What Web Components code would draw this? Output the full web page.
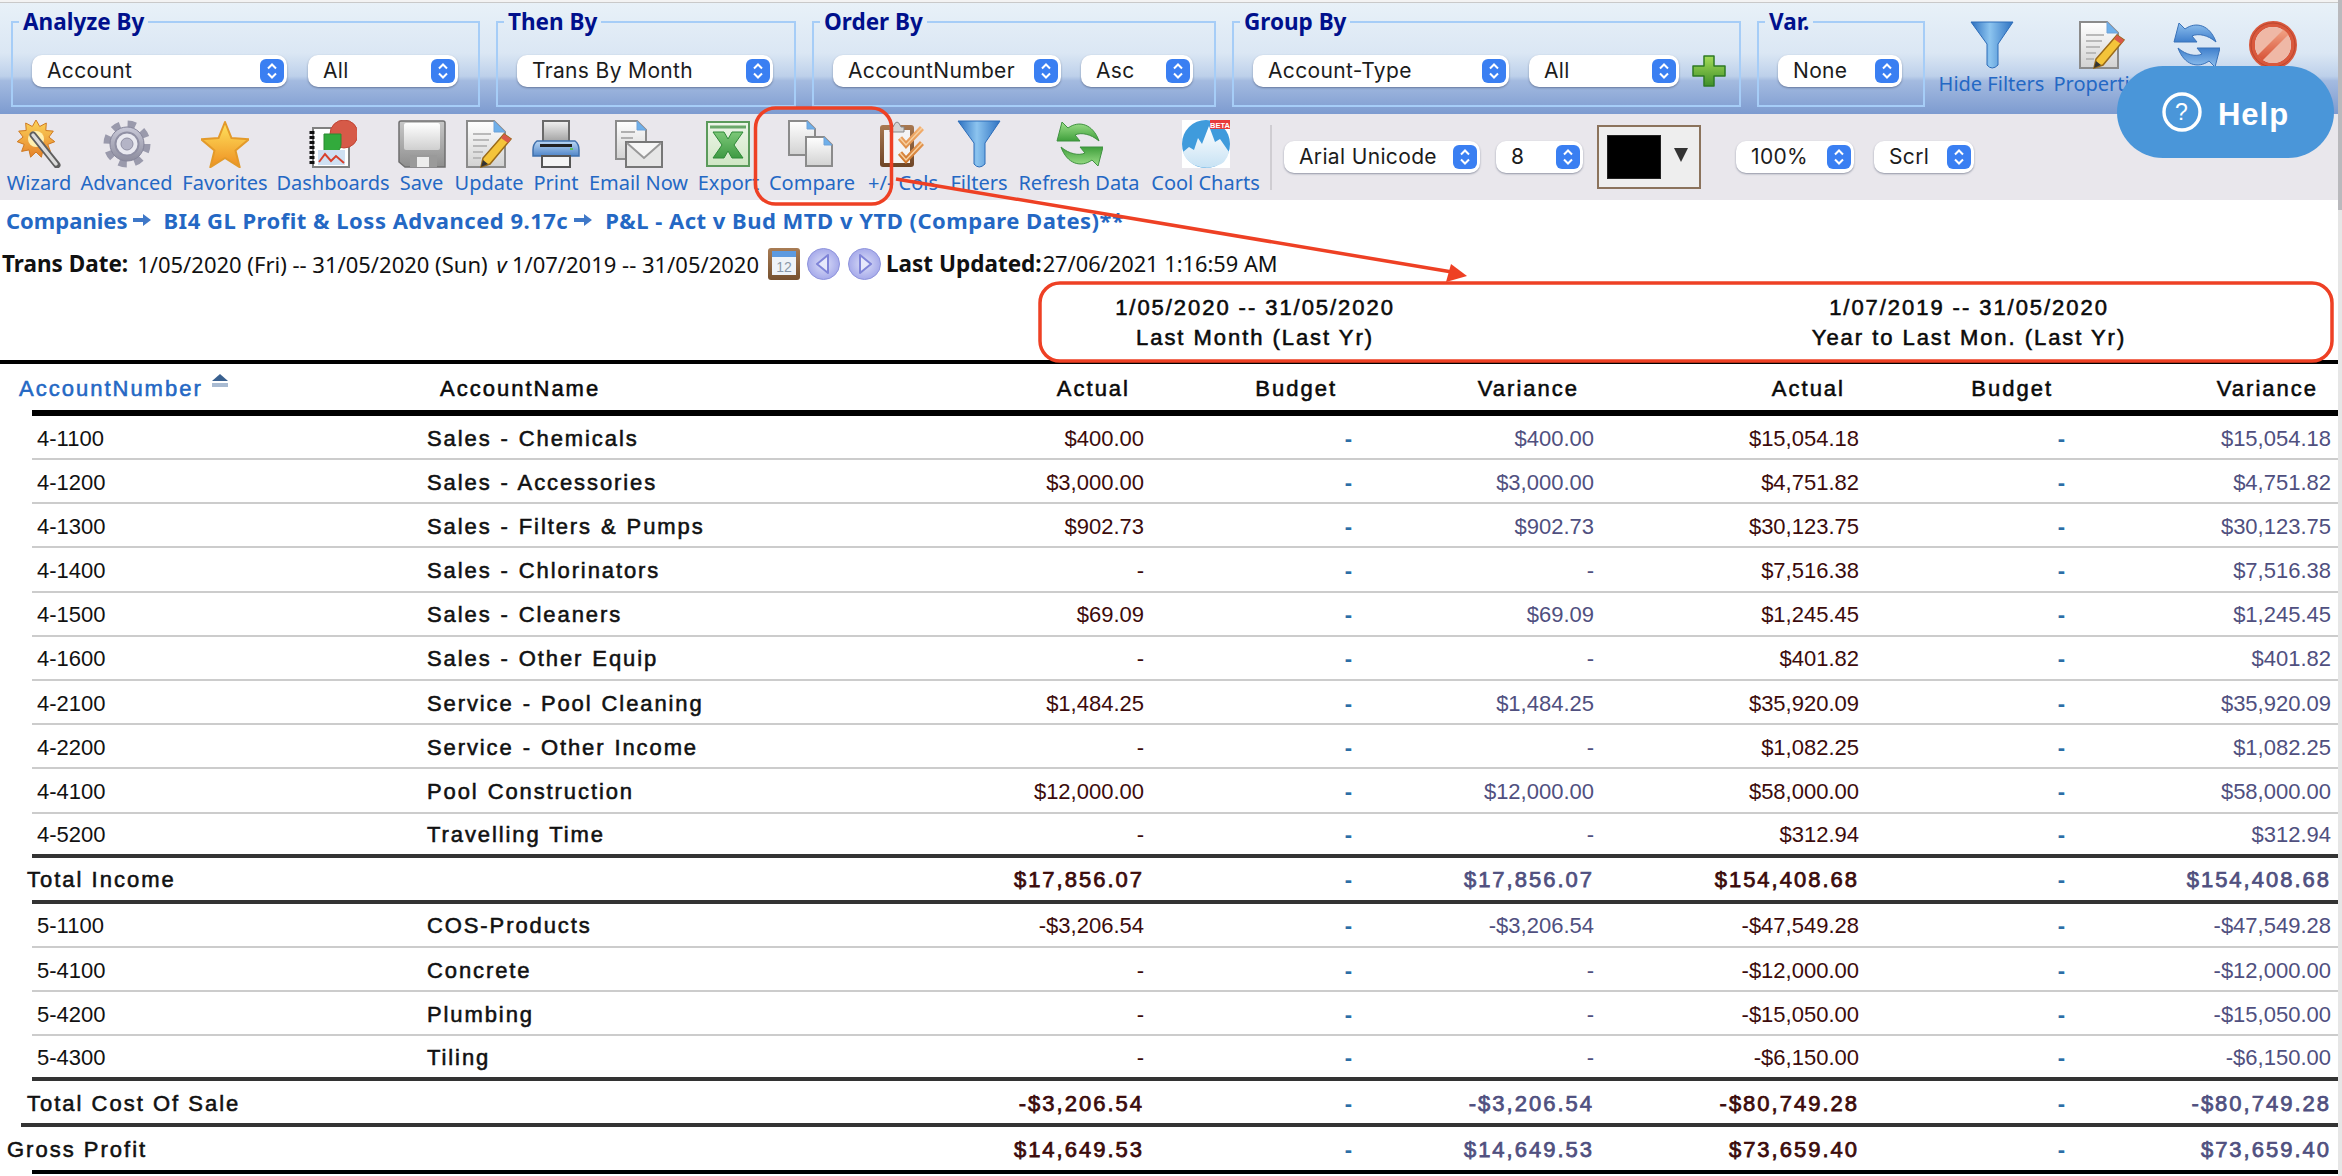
<!DOCTYPE html>
<html lang="en"><head><meta charset="utf-8"><title>Report</title>
<style>
html,body{margin:0;padding:0;background:#fff;}
body{width:2342px;height:1176px;overflow:hidden;position:relative;font-family:"Liberation Sans",Arial,sans-serif;}
</style></head><body>
<top-strip></top-strip>
<filter-bar>
  <filter-group legend="Analyze By" w="469"><pick-select w="255">Account</pick-select><pick-select w="150">All</pick-select></filter-group>
  <filter-group legend="Then By" w="300"><pick-select w="256">Trans By Month</pick-select></filter-group>
  <filter-group legend="Order By" w="404"><pick-select w="228">AccountNumber</pick-select><pick-select w="112" style="margin-left:-1px">Asc</pick-select></filter-group>
  <filter-group legend="Group By" w="509"><pick-select w="256">Account-Type</pick-select><pick-select w="150" style="margin-left:-1px">All</pick-select><bar-icon name="plus" style="margin-left:-8px"></bar-icon></filter-group>
  <filter-group legend="Var." w="168"><pick-select w="124">None</pick-select></filter-group>
  <tool-item icon="funnel" w="109" style="margin:12px 0 0 -4px">Hide Filters</tool-item>
  <tool-item icon="update" w="96" style="margin:12px 0 0 -8px">Properties</tool-item>
  <tool-item icon="refreshBlue" w="76" style="margin:12px 0 0 -8px"></tool-item>
  <tool-item icon="cancel" w="62" style="margin:12px 0 0 -8px"></tool-item>
</filter-bar>
<tool-bar>
  <tool-item icon="wizard" w="64">Wizard</tool-item>
  <tool-item icon="gear" w="93">Advanced</tool-item>
  <tool-item icon="star" w="86">Favorites</tool-item>
  <tool-item icon="dash" w="112">Dashboards</tool-item>
  <tool-item icon="save" w="47">Save</tool-item>
  <tool-item icon="update" w="70">Update</tool-item>
  <tool-item icon="print" w="46">Print</tool-item>
  <tool-item icon="email" w="101">Email Now</tool-item>
  <tool-item icon="excel" w="61">Export</tool-item>
  <tool-item icon="compare" w="88">Compare</tool-item>
  <tool-item icon="cols" w="76">+/- Cols</tool-item>
  <tool-item icon="funnel" w="58">Filters</tool-item>
  <tool-item icon="refresh" w="124">Refresh Data</tool-item>
  <tool-item icon="cool" w="111">Cool Charts</tool-item>
  <tool-sep></tool-sep>
  <pick-select w="196" style="margin:20px 0 0 3px">Arial Unicode</pick-select>
  <pick-select w="87" style="margin:20px 0 0 7px">8</pick-select>
  <color-pick style="margin:5px 0 0 5px"></color-pick>
  <pick-select w="118" style="margin:20px 0 0 26px">100%</pick-select>
  <pick-select w="100" style="margin:20px 0 0 11px">Scrl</pick-select>
</tool-bar>
<crumb-line></crumb-line>
<trans-line></trans-line>
<report-table></report-table>
<side-scroll></side-scroll>
<note-layer></note-layer>
<help-button>Help</help-button>
<script>
function spikes(cx,cy,R,r,n,rot){rot=rot||-Math.PI/2;let p=[];for(let i=0;i<n*2;i++){const a=rot+i*Math.PI/n,q=i%2?r:R;p.push((cx+q*Math.cos(a)).toFixed(1)+','+(cy+q*Math.sin(a)).toFixed(1));}return p.join(' ');}
const grad=(id,a,b,h)=>`<linearGradient id="${id}" x1="0" y1="0" x2="${h?1:0}" y2="${h?0:1}"><stop offset="0" stop-color="${a}"/><stop offset="1" stop-color="${b}"/></linearGradient>`;
const doc=(x,y,w,h,f)=>`<path d="M${x} ${y}H${x+w-f}L${x+w} ${y+f}V${y+h}H${x}Z" fill="url(#pg)" stroke="#8b8b8b" stroke-width="2"/><path d="M${x+w-f} ${y}V${y+f}H${x+w}Z" fill="#6fb0ea" stroke="#6fa2d8"/>`;
const arrows=(a,b,c)=>{const top=`<path d="M2 21L7 2L13 8C24 0 38 4 44 21C36 14 26 12 20 15L25 21Z" fill="url(#ar)" stroke="${c}" stroke-width="1"/>`;return `<defs>${grad('ar',a,b)}</defs>${top}<g transform="rotate(180 24 24) translate(-2 0)">${top}</g>`;};
const PG=`<defs>${grad('pg','#ffffff','#d2d2d2')}</defs>`;
const ICONS={
 wizard:`<defs>${grad('b','#fcd55a','#e5812a')}</defs><polygon points="${spikes(21,19,19,13,11)}" fill="url(#b)" stroke="#cf7a22"/><circle cx="21" cy="19" r="8" fill="#fff0b0"/><line x1="18" y1="15" x2="42" y2="45" stroke="#5f5f5f" stroke-width="7" stroke-linecap="round"/><line x1="18" y1="15" x2="41" y2="44" stroke="#dcdcdc" stroke-width="3.5" stroke-linecap="round"/>`,
 gear:`<defs>${grad('g','#c9c9d8','#8d8d9e')}</defs><circle cx="24" cy="24" r="20" fill="none" stroke="#9a9aac" stroke-width="7" stroke-dasharray="8 7.71"/><circle cx="24" cy="24" r="17" fill="url(#g)" stroke="#85859a"/><circle cx="24" cy="24" r="11.5" fill="#e9e9f0" stroke="#9090a4" stroke-width="2"/><circle cx="24" cy="24" r="6" fill="#b4b4c6" stroke="#9090a4"/>`,
 star:`<defs>${grad('s','#ffe45e','#ee8f22')}</defs><polygon points="${spikes(24,27,25,11,5)}" fill="url(#s)" stroke="#e39a2a" stroke-width="2" stroke-linejoin="round"/>`,
 dash:`<rect x="4" y="8" width="36" height="39" fill="#fff" stroke="#808080" stroke-width="2"/><path d="M3 11v34" stroke="#111" stroke-width="5" stroke-dasharray="3 2"/><circle cx="35" cy="14" r="14" fill="#d65a48" stroke="#c14535"/><path d="M15 14H32V24C32 31 26 34 20 34H15Z" fill="#32aa3c" stroke="#2a8a30"/><rect x="9" y="30" width="27" height="15" fill="#cfe0f2"/><polyline points="10,42 16,34 22,41 27,36 35,43" fill="none" stroke="#d8402c" stroke-width="2"/>`,
 save:`<defs>${grad('f','#ffffff','#cfcfcf')}${grad('f2','#c8c8c8','#8e8e8e')}</defs><path d="M3 1H45Q47 1 47 3V47H7L1 42V3Q1 1 3 1Z" fill="url(#f2)" stroke="#6f6f6f" stroke-width="1.5"/><rect x="6" y="3" width="36" height="27" rx="2" fill="url(#f)"/><rect x="12" y="35" width="27" height="12" fill="#9a9a9a"/><rect x="19" y="37" width="12" height="10" fill="#ededed"/>`,
 update:`${PG}${doc(2,1,38,46,11)}<g stroke="#b9b9b9" stroke-width="2"><path d="M8 14H26M8 20H24M8 26H22M8 32H18M8 38H16"/></g><path d="M39 14L46 19L25 44L16 47L18 38Z" fill="#f4c43a" stroke="#9a6a18" stroke-width="1.5"/><path d="M39 14L46 19L43 23L36 18Z" fill="#d8584a"/><path d="M16 47L18 40L23 44Z" fill="#333"/>`,
 print:`<defs>${grad('p','#bcd8f4','#4f85c8')}${grad('t','#f2f2f2','#9c9c9c')}</defs><rect x="11" y="1" width="26" height="22" fill="url(#t)" stroke="#6a6a6a" stroke-width="2"/><path d="M5 21H43Q47 24 47 30V36H1V30Q1 24 5 21Z" fill="url(#p)" stroke="#3f70ac" stroke-width="1.5"/><rect x="8" y="24" width="32" height="3" fill="#222"/><rect x="10" y="36" width="28" height="11" fill="#f4f4f4" stroke="#555" stroke-width="2"/><rect x="38" y="28" width="3" height="2" fill="#5cc060"/>`,
 email:`${PG}${doc(1,1,30,38,9)}<path d="M6 12H20M6 18H18" stroke="#b0b0b0" stroke-width="2"/><rect x="11" y="22" width="36" height="25" fill="#e6e6e6" stroke="#777" stroke-width="2"/><path d="M12 23L29 38L46 23" fill="#f6f6f6" stroke="#999" stroke-width="2"/>`,
 excel:`<defs>${grad('x','#eef6ea','#cfe6c4')}${grad('y','#7cc878','#3f9a44')}</defs><rect x="2" y="2" width="42" height="44" fill="url(#x)" stroke="#5b9a5b" stroke-width="2"/><path d="M5 7H41" stroke="#6aa86a" stroke-width="3"/><path d="M8 12H19L23 19L27 12H38L29 25L38 38H27L23 31L19 38H8L17 25Z" fill="url(#y)" stroke="#2f8a38"/>`,
 compare:`${PG}${doc(1,1,26,34,8)}${doc(18,17,26,29,8)}`,
 cols:`<defs>${grad('c','#a87850','#6e4526')}${grad('q','#f4b070','#d07a30')}</defs><rect x="1" y="5" width="34" height="42" rx="3" fill="url(#c)"/><rect x="5" y="10" width="26" height="33" fill="#f4f4f4"/><path d="M11 7H14Q18 -3 22 7H25V12H11Z" fill="#d4d4d4" stroke="#888"/><path d="M21 18L27 25L43 8M21 33L27 40L43 23" fill="none" stroke="url(#q)" stroke-width="5.5"/><path d="M21 18L27 25L43 8M21 33L27 40L43 23" fill="none" stroke="#f7d0a0" stroke-width="1.5"/>`,
 funnel:`<defs><linearGradient id="u2" x1="0" x2="1" y1="0" y2="0"><stop offset="0" stop-color="#2b6fc0"/><stop offset=".45" stop-color="#8cc4ef"/><stop offset="1" stop-color="#2e72c2"/></linearGradient></defs><path d="M3 1H45L30 23V44Q24 50 19 44V23Z" fill="url(#u2)" stroke="#2c6cb8"/>`,
 refresh:arrows('#9ee08a','#3f9f3c','#3f9140'),
 refreshBlue:arrows('#8fc0ee','#3f7fcc','#3a72b8'),
 cool:`<defs>${grad('m','#ffffff','#c7e2f4')}</defs><rect width="48" height="48" fill="#fff"/><circle cx="24" cy="24" r="24" fill="#3f9bdc"/><path d="M1 32L7 27L12 30L16 18L20 24L27 6L33 22L38 19L47 32Q44 44 34 46Q24 50 12 45Q3 40 1 32Z" fill="url(#m)"/><rect x="28" y="0" width="20" height="9" fill="#e83a3a"/><text x="38" y="7.5" text-anchor="middle" font-family="Liberation Sans" font-size="7.5" font-weight="700" fill="#fff">BETA</text>`,
 cancel:`<defs>${grad('k','#ef9d80','#d9583c')}</defs><circle cx="24" cy="24" r="21" fill="none" stroke="#d9583c" stroke-width="6"/><circle cx="24" cy="24" r="18" fill="#efb8a6"/><path d="M11 37L37 11" stroke="url(#k)" stroke-width="7"/><circle cx="24" cy="24" r="22" fill="none" stroke="#b9452f"/>`,
 plus:`<defs>${grad('l','#a4dc58','#3f8f2a')}</defs><path d="M12 1H22V11H33V21H22V31H12V21H1V11H12Z" fill="url(#l)" stroke="#2e7a24" stroke-linejoin="round" stroke-width="1.5"/>`
};
function def(name,css,html,extra){class C extends HTMLElement{constructor(){super();this.attachShadow({mode:'open'});}connectedCallback(){if(this.done)return;this.done=1;const h=typeof html==='function'?html(this):html;this.shadowRoot.innerHTML=`<style>${css}</style>${h}`;if(extra)extra(this);}}customElements.define(name,C);}
const NOTO='"Noto Sans","Liberation Sans",sans-serif';
const SANS='"Liberation Sans",Arial,sans-serif';
def('top-strip',`:host{display:block;height:3px;width:2338px;background:#f3f3f3;box-shadow:inset 0 -1px 0 #c9c9c9}`,``);
def('filter-bar',`:host{display:flex;gap:16px;box-sizing:border-box;width:2338px;height:111px;padding:6px 0 0 11px;background:linear-gradient(180deg,#e8f1f8 0,#dbe7f4 45%,#bdd0ea 66%,#a4bbe0 70%,#7d9bd0 100%)}`,`<slot></slot>`);
def('filter-group',`:host{display:block;flex:none}fieldset{box-sizing:border-box;margin:0;height:98px;width:100%;border:2px solid #a6cdf7;padding:20px 0 0 19px;display:flex;gap:21px;align-items:flex-start;min-width:0}legend{margin-left:-13px;padding:0 4px;font:700 22.5px/26px ${NOTO};color:#00108c;height:26px;white-space:nowrap}`,
 e=>{e.style.width=e.getAttribute('w')+'px';return `<fieldset><legend>${e.getAttribute('legend')}</legend><slot></slot></fieldset>`});
def('pick-select',`:host{display:flex;flex:none;box-sizing:border-box;height:32px;align-items:center;justify-content:space-between;background:#fff;border-radius:10px;box-shadow:0 1px 2px rgba(40,50,80,.45);padding:0 3px 0 15px;font:21px/32px Inter,"Liberation Sans",sans-serif;letter-spacing:.35px;color:#1c1c1c;white-space:nowrap}svg{display:block;flex:none}`,
 e=>{e.style.width=e.getAttribute('w')+'px';return `<span><slot></slot></span><svg width="24" height="24" viewBox="0 0 24 24"><rect width="24" height="24" rx="6" fill="#3a7ff2"/><path d="M8 9.5L12 5.5L16 9.5M8 14.5L12 18.5L16 14.5" fill="none" stroke="#fff" stroke-width="2"/></svg>`});
def('bar-icon',`:host{display:block;flex:none;width:34px;height:32px}svg{display:block}`,e=>`<svg width="34" height="32" viewBox="0 0 34 32">${ICONS[e.getAttribute('name')]}</svg>`);
def('tool-item',`:host{display:flex;flex:none;flex-direction:column;align-items:center;white-space:nowrap;font:20px/26px ${NOTO};color:#2468c4}svg{display:block;margin-bottom:2px;flex:none}`,
 e=>{e.style.width=e.getAttribute('w')+'px';return `<svg width="48" height="48" viewBox="0 0 48 48">${ICONS[e.getAttribute('icon')]}</svg><span><slot></slot></span>`});
def('tool-bar',`:host{display:flex;gap:9px;box-sizing:border-box;width:2338px;height:86px;padding:6px 0 0 7px;background:#e9e7ec}::slotted(pick-select){transform:translateY(1px)}`,`<slot></slot>`);
def('tool-sep',`:host{display:block;flex:none;width:2px;height:65px;margin-top:5px;background:#cfcdd2}`,``);
def('color-pick',`:host{display:flex;flex:none;box-sizing:border-box;width:104px;height:64px;border:2px solid #8b735c;background:#eeeeee;padding:8px;align-items:center;gap:13px}i{display:block;width:54px;height:44px;background:#000;border:1px solid #222;box-sizing:border-box}b{display:block;width:0;height:0;border-left:7px solid transparent;border-right:7px solid transparent;border-top:14px solid #333;margin-top:-4px}`,`<i></i><b></b>`);
def('crumb-line',`:host{display:flex;align-items:center;height:40px;box-sizing:border-box;padding:0 0 0 6px;font:700 22px/30px ${NOTO};color:#2468c4;white-space:nowrap}svg{flex:none;display:block}.a{margin:0 12px 0 6px}.b{margin:0 13px 0 6px}.s{letter-spacing:.5px}`,
 ()=>{const ar=c=>`<svg class="${c}" width="18" height="12" viewBox="0 0 18 12"><path d="M0 4H10V0L18 6L10 12V8H0Z" fill="#3f78c8"/></svg>`;return `<span>Companies</span>${ar('a')}<span class="s">BI4 GL Profit &amp; Loss Advanced 9.17c</span>${ar('b')}<span class="s">P&amp;L - Act v Bud MTD v YTD (Compare Dates)**</span>`});
const CAL=`<svg width="32" height="32" viewBox="0 0 32 32"><defs><linearGradient id="cb" x1="0" x2="0" y1="0" y2="1"><stop offset="0" stop-color="#a87c54"/><stop offset="1" stop-color="#76512f"/></linearGradient></defs><rect width="32" height="32" rx="3" fill="url(#cb)"/><rect x="4" y="3" width="24" height="24" fill="#eef3f8"/><rect x="4" y="3" width="24" height="6" fill="#5c9ae0"/><text x="16" y="24" text-anchor="middle" font-family="Liberation Sans" font-size="14" fill="#8a98a8">12</text></svg>`;
const nav=d=>`<svg width="33" height="32" viewBox="0 0 33 32"><defs><radialGradient id="n${d}"><stop offset="0" stop-color="#dcdff8"/><stop offset="1" stop-color="#a6aaea"/></radialGradient></defs><ellipse cx="16.5" cy="16" rx="16" ry="15.5" fill="url(#n${d})" stroke="#8f94dc"/><path d="${d<0?'M21 7V25L10 16Z':'M12 7V25L23 16Z'}" fill="#e6e8fb" stroke="#7f84d8" stroke-width="2" stroke-linejoin="round"/></svg>`;
def('trans-line',`:host{display:flex;align-items:center;height:46px;box-sizing:border-box;padding:2px 0 0 2px;font:22px/30px ${NOTO};color:#111;white-space:nowrap}b{font-weight:700;font-size:22.5px}svg{display:block;flex:none}.d{margin-left:9px}.v{font-style:italic;margin:0 5px 0 9px}.c{margin-left:9px}.n1{margin-left:7px}.n2{margin-left:8px}.u{margin-left:5px}.x{margin-left:1px;font-size:21.8px}`,
 `<b>Trans Date:</b><span class="d">1/05/2020 (Fri) -- 31/05/2020 (Sun)</span><i class="v">v</i><span>1/07/2019 -- 31/05/2020</span><span class="c" style="display:flex">${CAL}</span><span class="n1" style="display:flex">${nav(-1)}</span><span class="n2" style="display:flex">${nav(1)}</span><b class="u">Last Updated:</b><span class="x">27/06/2021 1:16:59 AM</span>`);
def('group-head',`:host{display:grid;grid-template-columns:1055px 400px 314px 400px;height:74px;box-sizing:border-box;padding-top:7px;font:22px/30px ${SANS};letter-spacing:1.95px;-webkit-text-stroke:.55px #0a0a0a;color:#0a0a0a;text-align:center}`,`<div></div><div>1/05/2020 -- 31/05/2020<br>Last Month (Last Yr)</div><div></div><div>1/07/2019 -- 31/05/2020<br>Year to Last Mon. (Last Yr)</div>`);
def('col-head',`:host{display:grid;grid-template-columns:427px 400px 317px 256px 194px 265px 271px 201px;align-items:center;width:2338px;box-sizing:border-box;height:50px;padding-top:3px;border-top:4px solid #000;font:22px/28px ${SANS};letter-spacing:2px;-webkit-text-stroke:.55px currentColor;color:#0a0a0a;white-space:nowrap}div{text-align:right}div.l{text-align:left}.num{padding-left:19px;color:#2468c4;display:flex;align-items:flex-start;gap:9px}svg{margin-top:-1px}`,
 `<div class="l num"><span>AccountNumber</span><svg width="16" height="13" viewBox="0 0 16 13"><path d="M8 0L16 7H0Z" fill="#39608f"/><rect y="9" width="16" height="4" fill="#a9bbd2"/></svg></div><div class="l" style="padding-left:13px">AccountName</div><div style="padding-right:14px">Actual</div><div style="padding-right:63px">Budget</div><div style="padding-right:15px">Variance</div><div style="padding-right:14px">Actual</div><div style="padding-right:77px">Budget</div><div style="padding-right:13px">Variance</div>`);
def('report-row',`:host{display:grid;box-sizing:border-box;width:calc(2338px - var(--ml,32px));margin-left:var(--ml,32px);padding-top:3px;align-items:center;grid-template-columns:calc(427px - var(--ml,32px)) 400px 317px 256px 194px 265px 271px 201px;font:22px/26px ${SANS};color:#111;white-space:nowrap;height:var(--h,44.2px);border-bottom:var(--bw,2px) solid var(--bc,#cccccc);border-top:var(--tw,0) solid #000}
 .code{margin-left:var(--tx,5px)}.name{letter-spacing:1.9px;word-spacing:1px;-webkit-text-stroke:.55px #111}.n{text-align:right}.a{color:#3c0b0b}.v{color:#50507f}.b{color:#2c6ea6;font-weight:700}.b1{padding-right:48px}.b2{padding-right:65px}
 :host([total]) .code{letter-spacing:2px;-webkit-text-stroke:.55px #111}:host([total]) .n{letter-spacing:2px;-webkit-text-stroke:.75px currentColor}:host([total]) .b{letter-spacing:0;-webkit-text-stroke:0}`,
 e=>{const d=JSON.parse(e.getAttribute('data'));return `<div class="code">${d[0]}</div><div class="name">${d[1]}</div><div class="n a">${d[2]}</div><div class="n b b1">-</div><div class="n v">${d[3]}</div><div class="n a">${d[4]}</div><div class="n b b2">-</div><div class="n v">${d[5]}</div>`});
const R=[
 ['4-1100','Sales - Chemicals','$400.00','$400.00','$15,054.18','$15,054.18'],
 ['4-1200','Sales - Accessories','$3,000.00','$3,000.00','$4,751.82','$4,751.82'],
 ['4-1300','Sales - Filters &amp; Pumps','$902.73','$902.73','$30,123.75','$30,123.75'],
 ['4-1400','Sales - Chlorinators','-','-','$7,516.38','$7,516.38'],
 ['4-1500','Sales - Cleaners','$69.09','$69.09','$1,245.45','$1,245.45'],
 ['4-1600','Sales - Other Equip','-','-','$401.82','$401.82'],
 ['4-2100','Service - Pool Cleaning','$1,484.25','$1,484.25','$35,920.09','$35,920.09'],
 ['4-2200','Service - Other Income','-','-','$1,082.25','$1,082.25'],
 ['4-4100','Pool Construction','$12,000.00','$12,000.00','$58,000.00','$58,000.00'],
 ['4-5200','Travelling Time','-','-','$312.94','$312.94','t'],
 ['Total Income','','$17,856.07','$17,856.07','$154,408.68','$154,408.68','T'],
 ['5-1100','COS-Products','-$3,206.54','-$3,206.54','-$47,549.28','-$47,549.28'],
 ['5-4100','Concrete','-','-','-$12,000.00','-$12,000.00'],
 ['5-4200','Plumbing','-','-','-$15,050.00','-$15,050.00'],
 ['5-4300','Tiling','-','-','-$6,150.00','-$6,150.00','e'],
 ['Total Cost Of Sale','','-$3,206.54','-$3,206.54','-$80,749.28','-$80,749.28','C'],
 ['Gross Profit','','$14,649.53','$14,649.53','$73,659.40','$73,659.40','G']
];
def('report-table',`:host{display:block}`,
 ()=>`<group-head></group-head><col-head></col-head><div id="rows"></div>`,
 e=>{const box=e.shadowRoot.getElementById('rows');
  R.forEach((r,i)=>{const el=document.createElement('report-row');el.setAttribute('data',JSON.stringify(r.slice(0,6)));const k=r[6],s=el.style;
   if(i==0){s.setProperty('--tw','6px');s.setProperty('--h','50px');}
   if(k=='t'||k=='e'||k=='T'||k=='C'){s.setProperty('--bw','4px');s.setProperty('--bc','#333');}
   if(k=='e'){s.setProperty('--h','45px');}
   if(k=='T'){el.setAttribute('total','');s.setProperty('--h','46.2px');s.setProperty('--tx','-5px');}
   if(k=='C'){el.setAttribute('total','');s.setProperty('--h','46px');s.setProperty('--ml','21px');s.setProperty('--tx','6px');}
   if(k=='G'){el.setAttribute('total','');s.setProperty('--h','46.2px');s.setProperty('--tx','-25px');s.setProperty('--bc','#000');s.setProperty('--bw','4px');}
   box.appendChild(el);});});
def('side-scroll',`:host{position:absolute;right:0;top:0;width:4px;height:1176px;background:linear-gradient(180deg,#b9b9bd 0,#b9b9bd 210px,#e6e6e6 210px,#e6e6e6 100%)}`,``);
def('note-layer',`:host{position:absolute;left:0;top:0;width:2342px;height:1176px;pointer-events:none}svg{display:block}`,
 `<svg width="2342" height="1176" viewBox="0 0 2342 1176" fill="none" stroke="#ee4024" stroke-width="3.5"><rect x="755.5" y="108" width="136" height="96" rx="20"/><rect x="1040" y="283" width="1292" height="78" rx="20"/><path d="M896 179L1452 272" stroke-width="3.5"/><path d="M1451 264L1467 276L1446 282Z" fill="#ee4024" stroke="none"/></svg>`);
def('help-button',`:host{position:absolute;left:2117px;top:66px;width:217px;height:92px;border-radius:46px;background:#4a96d9;color:#fff;display:flex;align-items:center;justify-content:center;gap:16px;font:700 31px/40px ${SANS};letter-spacing:1px;box-sizing:border-box}svg{display:block}span{margin-top:6px}`,
 `<svg width="40" height="40" viewBox="0 0 40 40"><circle cx="20" cy="20" r="18" fill="none" stroke="#fff" stroke-width="3.4"/><text x="20" y="28" text-anchor="middle" font-family="Liberation Sans" font-size="23" font-weight="400" fill="#fff">?</text></svg><span><slot></slot></span>`);
</script>
</body></html>
